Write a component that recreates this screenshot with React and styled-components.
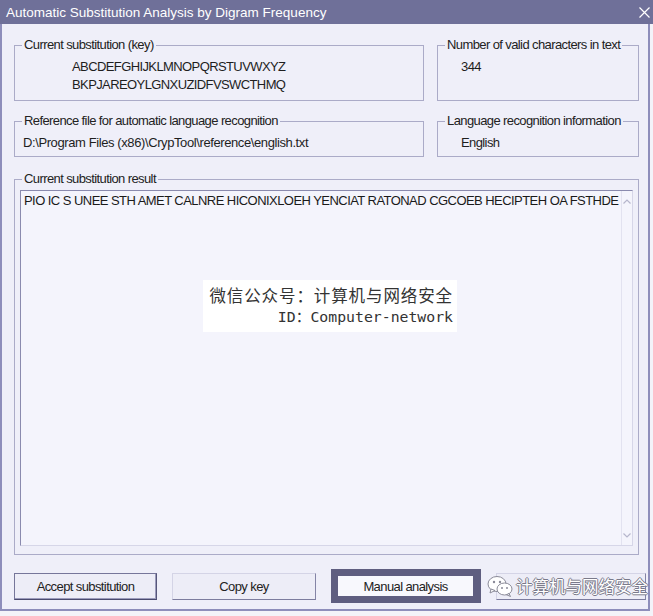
import React from "react";
import styled, { createGlobalStyle } from "styled-components";

const ui = `"Liberation Sans", Arial, sans-serif`;
const cjk = `"Noto Sans CJK SC", "Noto Sans", sans-serif`;

const Global = createGlobalStyle`
  html, body {
    margin: 0;
    padding: 0;
    background: #f3f3f9;
  }
  body {
    width: 653px;
    height: 616px;
    overflow: hidden;
  }
`;

const TitleBar = styled.div`
  height: 24px;
  background: #6f7099;
  display: flex;
  align-items: center;
  justify-content: space-between;
  padding: 0 3px 0 6px;
`;

const Title = styled.span`
  font-family: ${ui};
  font-size: 13.5px;
  color: #fff;
`;

const Frame = styled.div`
  box-sizing: border-box;
  width: 650px;
  height: 587px;
  background: #efeff9;
  border: 2px solid #8e8ebb;
  border-top: none;
  padding: 13px 0 0 12px;
`;

const Row = styled.div`
  display: grid;
  grid-template-columns: 410px 202px;
  column-gap: 13px;
  margin-bottom: ${(p) => p.$gap}px;
`;

const Group = styled.fieldset`
  box-sizing: border-box;
  margin: 0;
  min-width: 0;
  height: ${(p) => p.$h}px;
  width: ${(p) => (p.$w ? `${p.$w}px` : "auto")};
  padding: 0 ${(p) => p.$pad ?? 7}px;
  border: 1px solid #ababc8;
`;

const Legend = styled.legend`
  padding: 0 2px;
  margin-left: ${(p) => p.$shift ?? 0}px;
  font-family: ${ui};
  font-size: 13px;
  letter-spacing: -0.6px;
  line-height: 16px;
  color: #222;
  white-space: nowrap;
`;

const Values = styled.div`
  padding-top: 5px;
`;

const Value = styled.div`
  font-family: ${ui};
  font-size: 13px;
  letter-spacing: ${(p) => p.$ls ?? -0.6}px;
  line-height: 18px;
  color: #1e1e1e;
  padding-left: ${(p) => p.$indent}px;
  white-space: nowrap;
`;

const ResultBox = styled.div`
  position: relative;
  box-sizing: border-box;
  margin-top: 3px;
  height: 356px;
  display: flex;
  background: #f4f4fc;
  border: 1px solid;
  border-color: #8a8aae #d6d6e8 #d6d6e8 #8a8aae;
`;

const ResultText = styled.div`
  flex: 1;
  padding: 1px 0 0 3px;
  font-family: ${ui};
  font-size: 13px;
  letter-spacing: -0.55px;
  line-height: 18px;
  color: #1a1a1a;
  white-space: nowrap;
  overflow: hidden;
`;

const ScrollBar = styled.div`
  width: 10px;
  border-left: 1px solid #e2e2f0;
  display: flex;
  flex-direction: column;
  justify-content: space-between;
  align-items: center;
  padding: 8px 0 7px;
`;

const Chevron = ({ down }) => (
  <svg width="8" height="5" viewBox="0 0 8 5">
    <path
      d={down ? "M0.5 0.5 L4 4 L7.5 0.5" : "M0.5 4.5 L4 1 L7.5 4.5"}
      fill="none"
      stroke="#b6b6cc"
      strokeWidth="1.2"
    />
  </svg>
);

const Stamp = styled.div`
  position: absolute;
  left: 182px;
  top: 89px;
  width: 254px;
  height: 52px;
  box-sizing: border-box;
  background: #ffffff;
  padding: 5px 4px 0 0;
  text-align: right;
  color: #333;
`;

const StampLine = styled.div`
  font-family: ${(p) => (p.$mono ? `"DejaVu Sans Mono", "Noto Sans CJK SC", monospace` : cjk)};
  font-size: ${(p) => (p.$mono ? 14.8 : 16.5)}px;
  line-height: 21px;
  letter-spacing: ${(p) => (p.$mono ? 0 : 0.9)}px;
  white-space: nowrap;
`;

const ButtonRow = styled.div`
  position: relative;
  display: flex;
  align-items: center;
  gap: 15px;
  margin-top: 14px;
  height: 34px;
`;

const Button = styled.div`
  box-sizing: border-box;
  width: ${(p) => p.$w}px;
  height: 27px;
  display: flex;
  align-items: center;
  justify-content: center;
  background: #ededf7;
  border: 1px solid;
  border-color: ${(p) =>
    p.$default ? "#76769a #56567a #4a4a6e #76769a" : "#d4d4e6 #8484a6 #7c7c9e #d4d4e6"};
  box-shadow: ${(p) => (p.$default ? "inset -1px -1px 0 #9c9cbc" : "none")};
  font-family: ${ui};
  font-size: 13px;
  letter-spacing: -0.6px;
  color: #222;
`;

const FocusButton = styled.div`
  box-sizing: border-box;
  width: 150px;
  height: 34px;
  border: 7px solid #5f5e80;
  border-right-width: 8px;
  background: #f8f8fd;
  display: flex;
  align-items: center;
  justify-content: center;
  font-family: ${ui};
  font-size: 13px;
  letter-spacing: -0.6px;
  color: #222;
`;

const Watermark = styled.div`
  position: absolute;
  right: 0;
  top: 5px;
  display: flex;
  align-items: center;
  gap: 3px;
  font-family: ${cjk};
  font-size: 16.5px;
  color: #fff;
  text-shadow: 1px 0 0 #7a7a8a, -1px 0 0 #7a7a8a, 0 1px 0 #7a7a8a, 0 -1px 0 #7a7a8a;
  white-space: nowrap;
`;

const WeChat = () => (
  <svg width="26" height="22" viewBox="0 0 26 22">
    <ellipse cx="10" cy="9" rx="9" ry="7.5" fill="#fff" stroke="#8a8a98" strokeWidth="1" />
    <path d="M4 14 L3 18 L8 15.5 Z" fill="#fff" stroke="#8a8a98" strokeWidth="1" />
    <circle cx="7" cy="7" r="1.2" fill="#8a8a98" />
    <circle cx="13" cy="7" r="1.2" fill="#8a8a98" />
    <ellipse cx="17.5" cy="14" rx="7.5" ry="6" fill="#fff" stroke="#8a8a98" strokeWidth="1" />
    <path d="M22 18.5 L23.5 21.5 L19.5 19.7 Z" fill="#fff" stroke="#8a8a98" strokeWidth="1" />
    <circle cx="15" cy="13" r="1" fill="#8a8a98" />
    <circle cx="20" cy="13" r="1" fill="#8a8a98" />
  </svg>
);

const CloseIcon = () => (
  <svg width="11" height="11" viewBox="0 0 11 11">
    <path d="M0.5 0.5 L10.5 10.5 M10.5 0.5 L0.5 10.5" stroke="#fff" strokeWidth="1.2" />
  </svg>
);

export default function App() {
  return (
    <>
      <Global />
      <TitleBar>
        <Title>Automatic Substitution Analysis by Digram Frequency</Title>
        <CloseIcon />
      </TitleBar>
      <Frame>
        <Row $gap={12}>
          <Group $h={64}>
            <Legend>Current substitution (key)</Legend>
            <Values>
              <Value $indent={50}>ABCDEFGHIJKLMNOPQRSTUVWXYZ</Value>
              <Value $indent={50}>BKPJAREOYLGNXUZIDFVSWCTHMQ</Value>
            </Values>
          </Group>
          <Group $h={64}>
            <Legend>Number of valid characters in text</Legend>
            <Values>
              <Value $indent={16}>344</Value>
            </Values>
          </Group>
        </Row>
        <Row $gap={14}>
          <Group $h={44}>
            <Legend>Reference file for automatic language recognition</Legend>
            <Values>
              <Value $indent={1} $ls={-0.4}>D:\Program Files (x86)\CrypTool\reference\english.txt</Value>
            </Values>
          </Group>
          <Group $h={44}>
            <Legend>Language recognition information</Legend>
            <Values>
              <Value $indent={16}>English</Value>
            </Values>
          </Group>
        </Row>
        <Group $h={384} $w={625} $pad={5}>
          <Legend $shift={2}>Current substitution result</Legend>
          <ResultBox>
            <ResultText>
              PIO IC S UNEE STH AMET CALNRE HICONIXLOEH YENCIAT RATONAD CGCOEB HECIPTEH OA FSTHDE
            </ResultText>
            <ScrollBar>
              <Chevron />
              <Chevron down />
            </ScrollBar>
            <Stamp>
              <StampLine>微信公众号：计算机与网络安全</StampLine>
              <StampLine $mono>ID：Computer-network</StampLine>
            </Stamp>
          </ResultBox>
        </Group>
        <ButtonRow>
          <Button $w={143} $default>Accept substitution</Button>
          <Button $w={144}>Copy key</Button>
          <FocusButton>Manual analysis</FocusButton>
          <Button $w={150} />
          <Watermark>
            <WeChat />
            <span>计算机与网络安全</span>
          </Watermark>
        </ButtonRow>
      </Frame>
    </>
  );
}
